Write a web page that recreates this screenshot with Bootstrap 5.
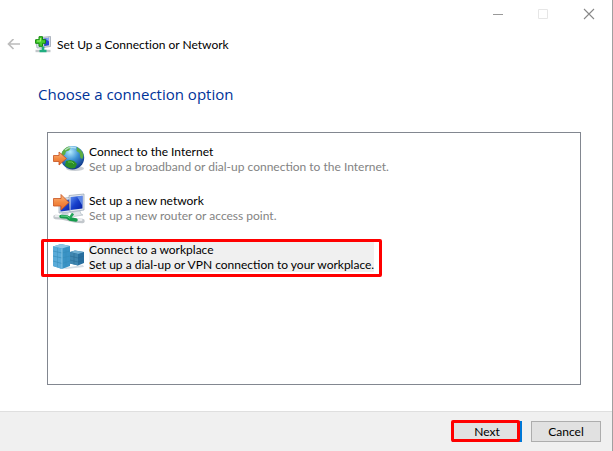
<!DOCTYPE html>
<html lang="en" class="h-100">
<head>
<meta charset="utf-8">
<meta name="viewport" content="width=device-width, initial-scale=1">
<title>Set Up a Connection or Network</title>
<link rel="stylesheet" href="https://cdn.jsdelivr.net/npm/bootstrap@5.3.0/dist/css/bootstrap.min.css">
<style>
  body { font: 12px/15px Lato, "Open Sans", sans-serif; font-variant-ligatures: none; color: #000; }
  .wizard { min-height: 100vh; border-right: 1px solid #a0a0a0; }
  .caption-btn { width: 46px; height: 28px; }
  .wizard-head { height: 33px; padding-left: 7px; }
  .title-icon { margin-left: 14px; }
  .wizard-title { font-size: 12px; line-height: 16px; margin-left: 6px; }
  .wizard-body { padding: 21px 31px 26px 38px; }
  .instruction { font: 15px/24px "Open Sans", sans-serif; color: #003399; }
  .choices { margin: 26px 0 0 9px; border: 1px solid #828790; padding-top: 3px; }
  .choice { padding: 8px 5px 9px; gap: 4px; color: #000; font-size: 12px; line-height: 15px; }
  .choice-icon { width: 32px; height: 32px; }
  .choice-text { height: 30px; white-space: nowrap; }
  .choice-note { color: #838383; }
  .choice.chosen .choice-note { color: #000; }
  .choice.chosen .choice-text { background: #f0f0f0; }
  .callout-wrap { width: fit-content; }
  .callout-wrap::after, .next-wrap::after { content: ""; position: absolute; border: 3px solid #f00; border-radius: 2px; pointer-events: none; }
  .callout-wrap::after { inset: 5px -3px 6px -7px; }
  .next-wrap::after { inset: -1px 2px 0 -1px; }
  .wizard-foot { height: 40px; padding: 9px 11px 9px 0; gap: 9px; background: #f0f0f0; border-top: 1px solid #dfdfdf; }
  .dialog-btn { width: 70px; height: 21px; padding: 0; font-size: 12px; line-height: 19px; color: #000; background: #e1e1e1; border: 1px solid #adadad; border-radius: 0; }
  .dialog-btn.default { border: 2px solid #0078d7; line-height: 17px; }
</style>
<script defer src="https://cdn.jsdelivr.net/npm/bootstrap@5.3.0/dist/js/bootstrap.bundle.min.js"></script>
</head>
<body class="bg-white">
<main class="wizard d-flex flex-column">
  <div class="d-flex justify-content-end">
    <button type="button" class="caption-btn btn border-0 rounded-0 p-0 d-flex align-items-center justify-content-center" aria-label="Minimize">
      <svg width="12" height="12" viewBox="0 0 12 12" shape-rendering="crispEdges"><path d="M2 6.500h10" stroke="#999"/></svg></button>
    <button type="button" class="caption-btn btn border-0 rounded-0 p-0 d-flex align-items-center justify-content-center" aria-label="Maximize">
      <svg width="12" height="12" viewBox="0 0 12 12"><path d="M1.500 1.500h9v9h-9z" fill="none" stroke="#e6e6e6"/></svg></button>
    <button type="button" class="caption-btn btn border-0 rounded-0 p-0 d-flex align-items-center justify-content-center" aria-label="Close">
      <svg width="12" height="12" viewBox="0 0 12 12"><path d="M1 1l10 10M11 1L1 11" stroke="#888" stroke-width="1.1"/></svg></button>
  </div>
  <header class="wizard-head d-flex align-items-center">
    <button type="button" class="btn border-0 p-0 d-flex" aria-label="Back">
      <svg width="14" height="12" viewBox="0 0 14 12"><path d="M13 5H1.500M6.500 0L1.500 5l5 5" fill="none" stroke="#bcbcbc" stroke-width="1.700"/></svg></button>
    <svg class="title-icon" width="16" height="17" viewBox="0 0 16 17">
      <path d="M5 1.500L15.500.500v10L5 12z" fill="#d6dce4" stroke="#8790a0" stroke-width=".6"/><path d="M7 3l7-1.200v7.400L7 10.500z" fill="#2545d0"/><path d="M10 2.500l4-.7v3.700z" fill="#85a2f2"/>
      <path d="M1 7h8v5H2z" fill="#d3dee6" stroke="#8fa1ae" stroke-width=".6"/>
      <path d="M.500 15h15" stroke="#c2c7ca" stroke-width="2.400"/><path d="M8 10.500v4M4.500 15h7" stroke="#20ae80" stroke-width="2.600"/>
      <path d="M4 .700h3.500v3h3v3.600h-3v3H4v-3H.600V3.700H4z" fill="#46cc2c" stroke="#138a0d"/><path d="M5.500 2v3H2" fill="none" stroke="#a0f179" stroke-width="1.200"/>
    </svg>
    <h1 class="wizard-title fw-normal mb-0">Set Up a Connection or Network</h1>
  </header>
  <section class="wizard-body flex-grow-1 d-flex flex-column">
    <h2 class="instruction fw-normal mb-0">Choose a connection option</h2>
    <div class="choices flex-grow-1">
      <button type="button" class="choice btn border-0 rounded-0 d-flex text-start">
        <svg class="choice-icon" viewBox="0 0 32 32">
          <defs>
            <radialGradient id="sea" cx=".4" cy=".25" r=".8"><stop offset="0" stop-color="#b5ebfd"/><stop offset=".45" stop-color="#3d92d5"/><stop offset="1" stop-color="#0a2d80"/></radialGradient>
            <linearGradient id="orange" x2="0" y2="1"><stop stop-color="#ffb882"/><stop offset=".5" stop-color="#f28a42"/><stop offset="1" stop-color="#e8682a"/></linearGradient>
            <linearGradient id="screen" x2="1" y2="1"><stop stop-color="#5f8fee"/><stop offset=".5" stop-color="#173fcb"/><stop offset="1" stop-color="#0720a0"/></linearGradient>
          </defs>
          <ellipse cx="22" cy="24.500" rx="9" ry="2.500" fill="#c9ced4"/>
          <circle cx="19.500" cy="13.700" r="11.700" fill="url(#sea)"/>
          <path d="M9 8q3-5 7-5.500l2 1-2 3-3 1-1 3-3 2-1-1zM24 3q5 3 6.500 8l-1 4-2-1-1-5-3-2z" fill="#5cae42"/>
          <path d="M13 17l4-1 4 1 3 3-2 4-4 .500q-4-1-6-3z" fill="#2c8f26"/><path d="M15 18l4 0 2 2" fill="none" stroke="#67c64a"/>
          <path d="M12 6q5-4 11-2" fill="none" stroke="#d3f3fa" stroke-width="1.500" opacity=".7"/>
          <path d="M.500 11.500H6V8l7.500 6.500L6 21v-3.500H.500z" fill="url(#orange)" stroke="#c65320" stroke-width=".8"/>
        </svg>
        <span class="choice-text"><span class="d-block">Connect to the Internet</span><span class="choice-note d-block">Set up a broadband or dial-up connection to the Internet.</span></span>
      </button>
      <button type="button" class="choice btn border-0 rounded-0 d-flex text-start">
        <svg class="choice-icon" viewBox="0 0 32 32">
          <path d="M6 6l13-2v15L6 20z" fill="#dbe4ee" stroke="#98a6b6" stroke-width=".7"/><path d="M7.500 8l11-2v11l-11 1.500z" fill="url(#screen)"/>
          <path d="M16 2.500L31 1v16l-14 2z" fill="#e3e9ef" stroke="#92a0b1" stroke-width=".7"/><path d="M17.500 4L29.500 2.800v12.700l-12 1.500z" fill="url(#screen)"/>
          <path d="M24 3.400l5.500-.6v10z" fill="#719cf0" opacity=".8"/>
          <path d="M20 19l7-1 1 3 2 1-9 1.500-3-1.500z" fill="#e0e5e9" stroke="#aab5be" stroke-width=".6"/>
          <path d="M9 20l6-.5 1 2-8 1z" fill="#c3ced8"/>
          <path d="M2.500 24l7 .5 13 3 7 .5" fill="none" stroke="#c2c7cc" stroke-width="4.500" stroke-linecap="round"/><path d="M2.500 23l7 .5 13 3 6 .5" fill="none" stroke="#eceef0" stroke-width="2" stroke-linecap="round"/>
          <path d="M8 23.500l6 .5 3 2 6 1" fill="none" stroke="#169b4b" stroke-width="3.500" stroke-linecap="round"/><path d="M8 23l6 .3 3 2" fill="none" stroke="#62d58a"/>
          <path d="M17 25l3-4.500" stroke="#24a65a" stroke-width="2.500"/>
          <path d="M.500 5.500H8V1.500L16 9.500 8 17v-4H.500z" fill="url(#orange)" stroke="#c65320" stroke-width=".8"/>
        </svg>
        <span class="choice-text"><span class="d-block">Set up a new network</span><span class="choice-note d-block">Set up a new router or access point.</span></span>
      </button>
      <div class="callout-wrap position-relative">
        <button type="button" class="choice chosen btn border-0 rounded-0 d-flex text-start" aria-pressed="true">
          <svg class="choice-icon" viewBox="0 0 32 32">
            <path d="M10 26l20-3 1 2-18 2z" fill="#d4dce3"/>
            <path d="M0 4.500L8 2l9 2v20l-8 3-9-3z" fill="#3a93c5"/><path d="M0 4.500L8 2l9 2-8 2.500z" fill="#8cc6e5"/><path d="M0 4.500l9 2V27l-9-3z" fill="#5aabd8"/>
            <path d="M0 9l9 2 8-2M0 14l9 2 8-2M0 19l9 2.500 8-2.500" fill="none" stroke="#348bb9" stroke-width=".6"/><path d="M4.500 6v19M13 6v19" stroke="#348bb9" stroke-width=".4"/>
            <path d="M9 6.500V27" stroke="#92cdea" stroke-width=".8"/>
            <path d="M17 10l5-1.500L31 10v11l-6 2.500-8-2z" fill="#286f9f"/><path d="M17 10l5-1.500L31 10l-6 2z" fill="#73b1d3"/><path d="M17 10l8 2v11.500l-8-2z" fill="#4086b0"/>
            <path d="M17 14l8 2 6-2M17 18l8 2 6-2M21 11v11" fill="none" stroke="#27678f" stroke-width=".5"/>
          </svg>
          <span class="choice-text"><span class="d-block">Connect to a workplace</span><span class="choice-note d-block">Set up a dial-up or VPN connection to your workplace.</span></span>
        </button>
      </div>
    </div>
  </section>
  <footer class="wizard-foot d-flex justify-content-end">
    <div class="next-wrap position-relative d-flex"><button type="button" class="dialog-btn default btn">Next</button></div>
    <button type="button" class="dialog-btn btn">Cancel</button>
  </footer>
</main>
</body>
</html>
